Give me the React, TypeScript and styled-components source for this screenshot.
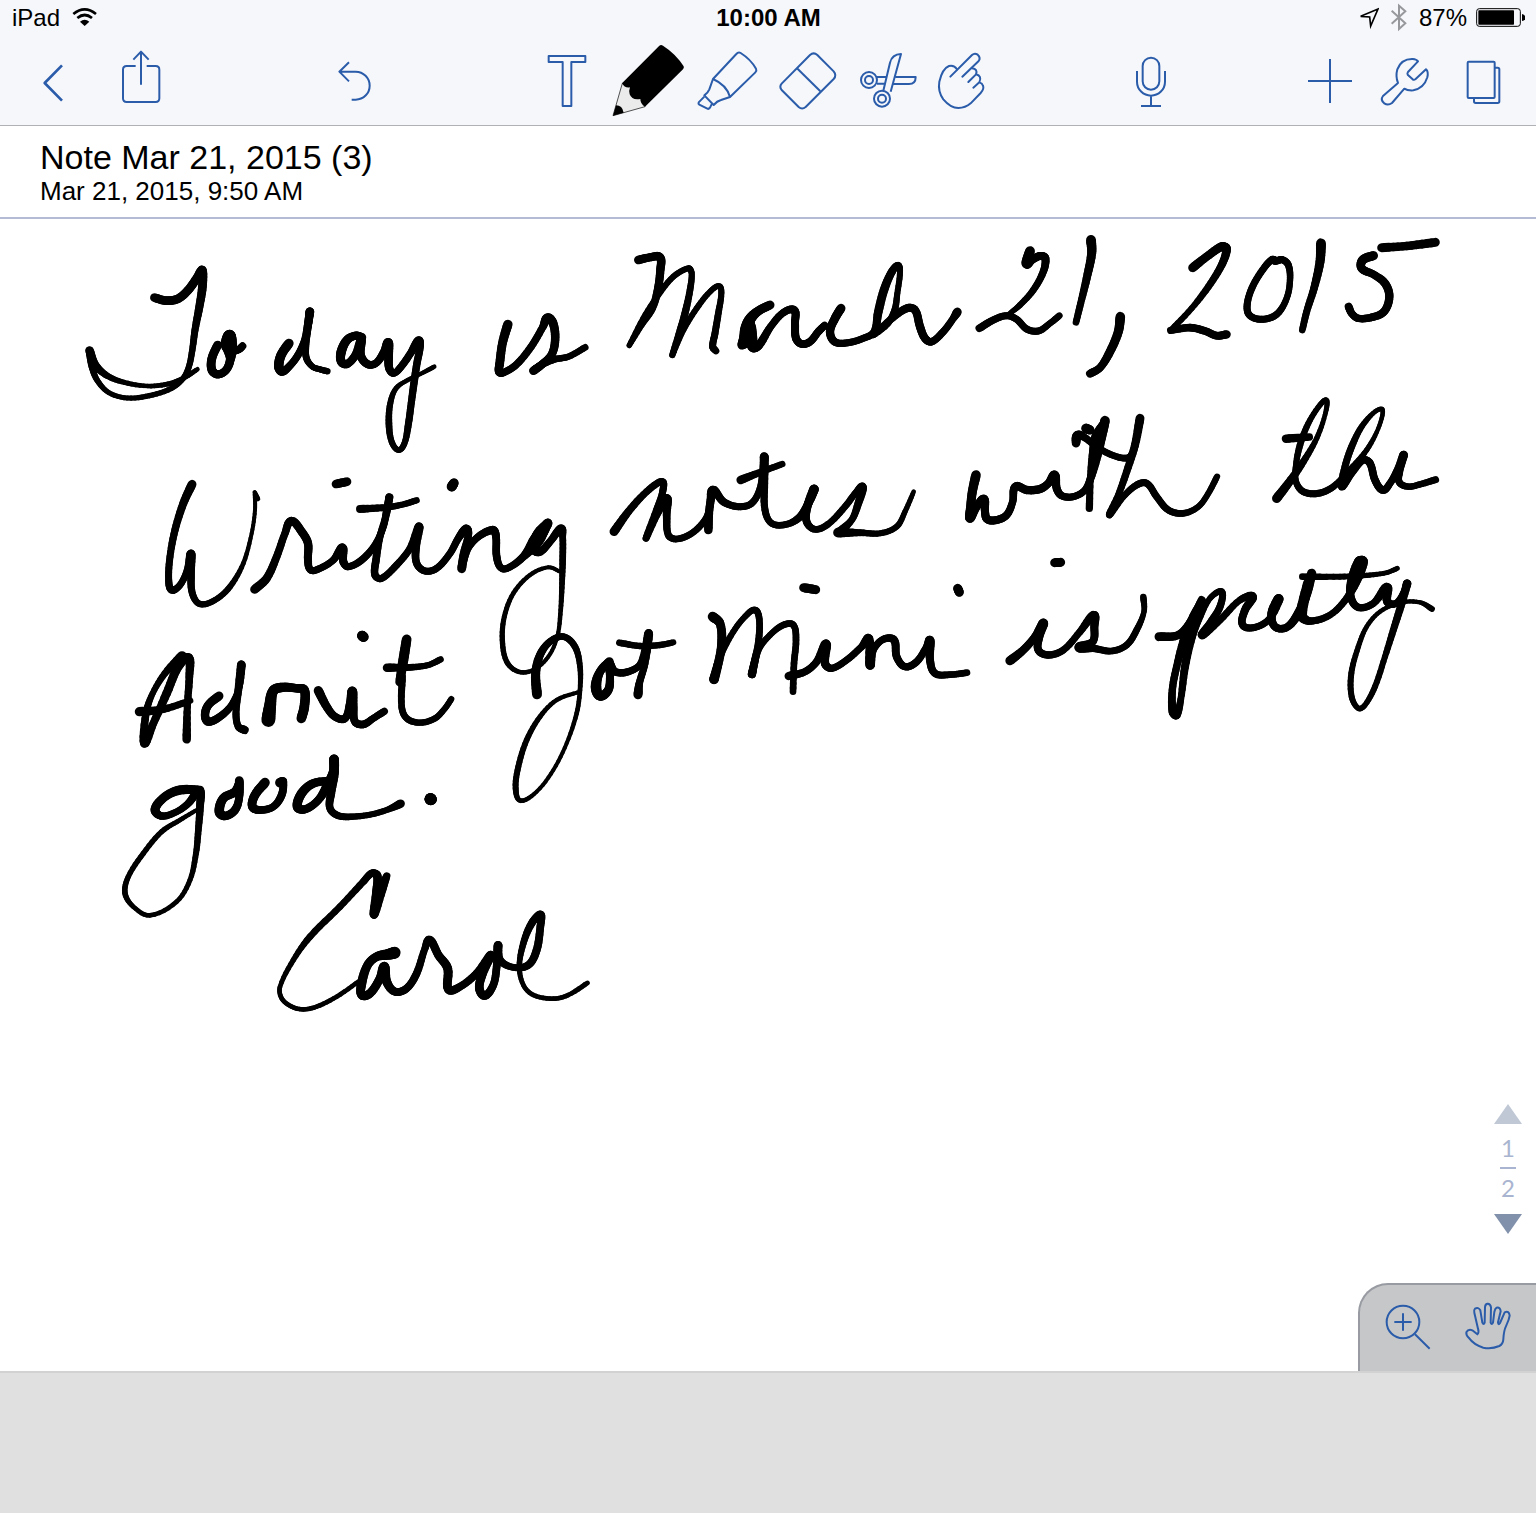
import React from "react";
import styled, { createGlobalStyle } from "styled-components";

const INK = "#2a5caa";
const BAR = "#f6f7fb";

const GlobalStyle = createGlobalStyle`
  * { box-sizing: border-box; }
  body {
    margin: 0;
    background: #e0e0e0;
    color: #000;
    font-family: "Liberation Sans", Arial, Helvetica, sans-serif;
  }
`;

const Screen = styled.div`
  display: flex;
  flex-direction: column;
  min-height: 100vh;
`;

const TopBar = styled.header`
  background: ${BAR};
  border-bottom: 1px solid #b0b1b5;
`;

const StatusBar = styled.div`
  display: grid;
  grid-template-columns: 1fr auto 1fr;
  align-items: center;
  height: 37px;
  padding: 0 11px 2px 12px;
  font-size: 24px;
  line-height: 28px;
`;

const StatusGroup = styled.div<{ $end?: boolean }>`
  display: flex;
  align-items: center;
  justify-content: ${(p) => (p.$end ? "flex-end" : "flex-start")};
  gap: 12px;
`;

const Battery = styled.span`
  display: flex;
  align-items: center;
  gap: 9px;
`;

const Clock = styled.time`
  font-weight: 700;
`;

const StatusGlyph = styled.svg`
  display: block;
  height: 31px;
  fill: none;
  stroke: #000;
`;

const Toolbar = styled.nav`
  display: grid;
  grid-template-columns: 1fr auto 1fr;
  height: 88px;
`;

const ToolZone = styled.div<{ $pad?: string }>`
  display: flex;
  justify-content: space-between;
  padding: ${(p) => p.$pad ?? "0"};
`;

const ToolGroup = styled.div<{ $gap?: number }>`
  display: flex;
  gap: ${(p) => p.$gap ?? 0}px;
`;

const IconButton = styled.button`
  display: block;
  width: 80px;
  height: 100%;
  padding: 0;
  border: 0;
  background: none;
  cursor: pointer;
`;

const LineIcon = styled.svg`
  display: block;
  width: 100%;
  height: 100%;
  fill: none;
  stroke: ${INK};
  stroke-width: 6;
  stroke-linejoin: round;
`;

const NoteHeading = styled.section`
  padding: 11px 40px 12px;
  background: #fff;
  border-bottom: 2px solid #b3bcd4;
`;

const NoteTitle = styled.h1`
  margin: 0;
  font-size: 34px;
  font-weight: 400;
  line-height: 40px;
`;

const NoteDate = styled.p`
  margin: 0;
  font-size: 26px;
  line-height: 28px;
`;

const Page = styled.main`
  position: relative;
  background: #fff;
`;

const InkLayer = styled.svg`
  display: block;
  width: 100%;
  stroke: #000;
  stroke-linecap: round;
`;

const Pager = styled.div`
  position: absolute;
  right: 14px;
  bottom: 137px;
  display: flex;
  flex-direction: column;
  align-items: center;
  width: 28px;
  color: #a9b5d0;
  font-family: Lato, "Liberation Sans", sans-serif;
  font-size: 24px;
  line-height: 28px;
`;

const PageNumbers = styled.div`
  display: flex;
  flex-direction: column;
  align-items: center;
  gap: 5px;
  padding: 10px 0 12px;
`;

const Divider = styled.span`
  width: 16px;
  height: 2px;
  background: #a9b5d0;
`;

const ArrowButton = styled.button<{ $down?: boolean }>`
  width: 28px;
  height: 20px;
  padding: 0;
  border: 0;
  background: ${(p) => (p.$down ? "#8190ab" : "#c0c8d5")};
  clip-path: ${(p) =>
    p.$down ? "polygon(0 0, 100% 0, 50% 100%)" : "polygon(50% 0, 100% 100%, 0 100%)"};
  cursor: pointer;
`;

const ViewTools = styled.div`
  position: absolute;
  right: 0;
  bottom: 0;
  display: flex;
  height: 88px;
  padding: 0 8px;
  background: #c6c7c9;
  border: solid #989ba1;
  border-width: 2px 0 0 2px;
  border-top-left-radius: 30px;
`;

const Desk = styled.footer`
  flex: 1;
  min-height: 40px;
  background: #e0e0e0;
  border-top: 2px solid #d2d2d3;
`;

/* Each word group keeps its pen samples as "x,y,width" triples in its own space. */
type InkGroup = { x: number; y: number; unitX: number; unitY: number; strokes: string[] };

const INK_GROUPS: InkGroup[] = [
  {
    x: 70, y: 230, unitX: 2.96, unitY: 3,
    strokes: [
      "250,203,26 285,212,26 320,206,26 350,180,26 375,145,26 392,120,24 392,170,26 383,230,24 370,300,21 362,360,19 352,410,18 335,445,17 300,475,16 235,497,16 170,504,15 115,488,15 80,450,17 65,410,20 58,362,24",
      "58,362,26 75,405,24 110,437,19 160,457,15 230,468,14 290,462,15 335,445,15 377,418,14",
      "437,345,26 420,385,26 420,420,26 437,433,24 462,420,24 475,385,26 472,345,46 472,318,36 468,345,44 480,362,22 500,358,22 511,348,22",
      "648,340,28 625,375,28 618,410,28 628,425,24 650,408,22 675,375,22 695,330,22 705,280,24 710,245,26 703,300,22 698,350,20 700,385,20 718,410,18 740,418,18 762,424,19",
      "864,322,26 845,317,24 820,330,26 803,365,28 803,395,26 820,402,24 845,375,24 862,330,26 860,375,26 880,402,24 905,400,22 930,365,24 942,338,28 943,380,26 945,415,24 958,430,20 980,410,22 1008,370,22 1031,332,26 1036,350,22 1027,400,22 1018,460,22 1010,520,21 1002,580,21 990,640,18 972,660,17 952,635,18 944,580,20 948,520,18 965,475,15 1000,450,13 1045,428,13 1078,410,14",
      "1296,283,28 1280,340,26 1272,400,26 1270,425,24 1282,428,22 1320,405,22 1365,350,22 1400,290,22 1413,264,28 1430,280,26 1436,330,25 1425,375,24 1395,405,24 1372,422,26",
      "1372,422,24 1400,402,22 1435,388,20 1475,380,19 1525,352,20",
    ],
  },
  {
    x: 600, y: 230, unitX: 3, unitY: 3,
    strokes: [
      "115,90,26 150,82,24 180,82,26 181,120,25 174,175,24 157,235,22 125,285,18 88,346,16",
      "88,346,16 130,265,18 175,195,18 220,140,18 265,115,18 275,130,18 270,180,20 255,250,22 240,300,20 217,375,19",
      "217,375,18 250,300,18 290,235,18 330,185,17 357,168,17 364,190,18 355,250,20 345,310,21 338,350,21 348,363,20",
      "510,225,27 475,243,27 450,268,32 442,300,44 440,325,46 426,345,26",
      "452,290,32 455,325,34 458,352,28 477,345,26 512,290,22 550,248,22 583,241,24 585,280,24 588,325,24 605,342,23 630,335,23 655,305,23 674,286,22",
      "723,235,27 705,265,26 690,305,25 705,336,23 745,338,21 790,325,21 822,306,22 835,245,26 852,180,26 874,128,24 893,106,20 900,125,18 892,190,18 884,240,20 862,282,20 820,316,16 870,270,22 920,235,24 945,240,24 960,290,25 975,325,24 995,335,22 1030,305,22 1060,265,21 1072,246,27",
    ],
  },
  {
    x: 960, y: 225, unitX: 3, unitY: 3,
    strokes: [
      "210,78,29 200,115,31 215,105,24 240,93,24 256,100,24 250,140,22 220,195,20 180,240,18 150,265,15",
      "58,310,23 100,285,22 140,272,21 170,283,21 200,312,21 235,318,21 270,295,19 298,272,20",
      "393,45,30 395,85,27 380,160,24 362,235,21 348,292,20",
      "481,275,29 475,320,27 450,380,26 420,428,23 390,446,24",
      "698,128,27 740,95,25 785,65,27 800,72,26 785,120,23 745,185,21 695,250,18 636,312,18",
      "632,316,22 690,308,23 735,318,23 770,332,23 800,328,25",
      "945,107,26 936,104,21 915,125,21 880,180,21 862,235,21 868,270,21 905,283,21 950,268,21 980,220,19 990,165,19 985,120,21 967,104,21 950,108,22",
      "1083,55,30 1080,110,27 1062,190,23 1040,260,21 1027,315,20",
      "1240,92,28 1208,105,27 1205,130,25 1240,148,23 1275,175,25 1288,215,25 1272,260,24 1235,277,23 1195,280,22 1175,265,22 1166,245,24",
      "1265,68,27 1340,63,25 1426,52,27",
      "48,750,29 37,800,27 32,845,27 30,880,27 50,845,24 72,822,26 75,860,24 82,883,24 110,885,24 140,870,23 158,830,22 166,785,24 200,795,25 240,792,25 265,775,23 284,750,27 290,790,24 305,812,22 340,815,21 375,795,21 395,750,24 413,680,30 428,620,28 435,587,29",
      "430,600,28 410,635,32 402,680,30 392,750,20 388,850,22",
      "348,655,25 352,632,29 370,635,22 420,672,20 470,695,20 505,698,20 520,680,20",
      "540,580,27 525,660,24 500,740,22 475,810,20 448,870,20 490,815,19 530,780,21 560,775,21 590,815,21 625,855,21 670,865,20 715,845,18 745,805,18 771,755,19",
      "378,610,29 390,615,27",
      "950,820,28 985,775,25 1030,710,21 1070,640,16 1095,570,14 1100,527,16 1080,540,16 1045,595,18 1020,660,20 1008,720,18 1008,770,19 1030,800,21 1075,805,21 1120,785,20 1170,735,20 1220,675,16 1255,610,13 1268,555,14 1245,560,14 1205,605,18 1175,665,21 1155,725,21 1145,785,22 1175,745,21 1210,705,21 1230,715,23 1245,765,23 1268,795,23 1290,775,21 1315,730,23 1331,690,26 1318,740,23 1318,772,21 1345,785,19 1380,778,19 1427,764,21",
      "978,641,26 1048,636,22",
    ],
  },
  {
    x: 100, y: 460, unitX: 3, unitY: 3,
    strokes: [
      "276,73,27 250,130,24 225,210,22 210,290,21 206,360,21 215,390,22 240,375,20 262,330,21 273,282,27 273,340,23 277,400,21 300,432,19 345,420,18 390,380,18 430,310,14 455,220,12 465,150,12 464,98,12",
      "464,96,12 474,117,14",
      "464,388,27 500,355,25 530,290,23 555,220,22 574,183,25 605,215,25 624,250,25 624,300,24 632,330,21 660,325,21 700,300,21 727,263,26 730,305,24 745,320,21 785,300,22 825,255,21 850,200,21 860,150,21 868,112,24 860,160,21 840,230,21 828,300,23 825,345,22 845,355,21 890,315,21 930,265,21 957,200,26 948,260,24 950,310,22 975,333,21 1010,325,21 1050,280,21 1075,235,22 1098,207,27 1105,225,22 1092,280,25 1085,326,27",
      "1090,310,20 1105,265,20 1135,230,22 1178,210,25 1188,230,23 1190,290,23 1205,325,21 1235,318,21 1275,285,24 1310,240,44 1343,190,27",
      "1343,190,27 1318,225,42 1302,265,32 1320,275,24 1350,245,22 1382,206,25 1388,230,20 1388,300,20 1386,370,17 1382,450,14 1372,530,12 1345,590,12 1300,630,13 1255,635,14 1220,605,16 1207,540,16 1213,470,15 1240,400,14 1290,345,13 1345,322,12 1380,335,12",
      "708,72,26 741,65,26",
      "1055,80,30 1062,69,28",
      "780,147,24 860,142,20 910,133,18 950,121,19",
      "246,588,30 195,640,20 158,700,18 138,760,22 133,850,26 160,790,23 200,700,26 235,620,26 266,594,28 268,650,23 262,740,21 260,838,26",
      "118,755,28 190,748,22 270,722,20",
      "357,708,27 325,735,25 315,765,25 325,785,25 360,770,23 395,735,21 418,680,20 424,614,26 415,690,23 408,760,21 415,800,21 434,810,25",
      "505,780,42 510,740,36 520,692,30 548,682,28 590,685,25 613,690,28 613,740,29 604,775,29",
      "655,692,28 680,740,25 705,770,23 735,775,23 750,730,24 757,694,29 760,740,25 765,785,23 790,793,23 820,775,21 853,754,22",
      "786,527,30 791,531,30",
      "920,538,29 910,600,30 899,666,26",
      "907,650,22 905,740,20 920,775,20 960,788,19 1005,775,19 1035,745,18 1054,717,18",
      "861,623,26 930,622,20 985,615,18 1022,598,19",
      "1311,703,30 1307,640,27 1320,585,24 1350,545,21 1390,530,20 1425,560,20 1440,620,17 1440,690,14 1430,760,14 1400,850,12 1360,930,12 1310,995,12 1262,1022,14 1247,985,18 1255,920,18 1280,840,17 1320,770,15 1370,720,13 1440,695,12",
    ],
  },
  {
    x: 500, y: 400, unitX: 3, unitY: 3,
    strokes: [
      "342,395,27 385,335,23 440,275,21 485,245,22 488,275,21 470,330,22 438,415,20 470,345,22 500,295,27 500,345,23 505,405,21 530,417,20 575,400,20 615,360,20 630,320,20 638,270,26 670,305,23 715,320,21 755,310,21 780,265,20 790,200,22 793,172,27 793,250,23 795,330,21 815,370,20 860,373,20 900,350,23 930,300,25 942,268,29 922,320,25 920,365,23 945,388,20 985,372,20 1035,320,20 1070,275,20 1088,262,26 1075,310,23 1055,360,20 1015,398,26",
      "625,390,26 628,330,24 636,275,25",
      "1014,398,30 1080,398,20 1140,400,18 1190,380,18 1215,335,16 1241,275,14",
      "722,240,26 785,215,20 847,192,19",
      "328,785,27 300,815,25 288,860,32 300,888,28 325,870,26 330,830,24 328,790,25 345,815,23 385,815,22 422,790,20 446,700,26 435,790,21 418,850,22 414,884,28",
      "358,728,20 420,738,19 480,735,19 520,727,18",
      "638,650,30 660,670,26 665,730,27 655,790,26 642,838,29 660,770,21 700,695,18 735,650,18 765,630,20 778,660,20 775,730,21 765,780,23 756,822,25 775,750,20 810,705,18 850,675,20 880,675,20 888,720,20 882,790,20 879,875,20",
      "866,828,25 915,815,22 950,785,22 978,732,28 975,790,25 995,805,21 1040,780,21 1085,740,21 1107,716,26 1110,795,28 1120,750,21 1150,718,21 1182,720,24 1190,770,23 1215,800,22 1250,785,22 1280,740,21 1290,722,28 1290,780,24 1305,820,22 1350,824,20 1401,818,20",
      "911,563,27 947,569,27",
      "1373,565,27 1378,577,27",
    ],
  },
  {
    x: 980, y: 390, unitX: 3, unitY: 3,
    strokes: [
      "90,812,28 130,780,24 165,740,23 190,700,29 178,740,24 175,780,23 205,795,22 250,780,21 300,725,21 340,676,27 343,710,24 338,755,23 298,772,30 340,775,22 395,783,20 440,765,20 470,720,20 492,665,16 490,621,20",
      "224,518,27 242,517,27",
      "537,740,27 595,735,24 635,690,24 665,630,24",
      "665,632,22 640,680,26 615,740,26 590,830,22 577,900,22 578,965,25 590,975,24 602,930,20 615,830,24 635,740,26 655,690,22 690,625,17 725,605,20 720,650,22 690,700,23 667,735,26 720,690,21 780,630,20 818,620,26 795,660,24 788,705,22 825,712,21 870,685,21 896,627,30 875,670,26 885,710,23 920,712,23 955,670,27 980,610,28 995,550,28",
      "985,580,32 965,675,32 990,693,22 1050,675,20 1100,625,21 1130,570,28 1148,515,32 1135,515,26 1115,570,26 1112,620,24 1135,652,22 1180,640,21 1220,592,28 1222,635,25 1248,640,20 1275,600,20 1281,582,26 1262,650,23 1240,720,21 1215,800,18 1185,890,18 1155,945,16 1135,955,16 1115,920,18 1114,850,18 1135,770,16 1160,710,14 1200,665,13 1260,638,13 1320,637,13 1356,657,18",
      "967,560,20 1080,560,18 1160,556,16 1220,548,14 1252,535,15",
    ],
  },
  {
    x: 100, y: 740, unitX: 3, unitY: 3,
    strokes: [
      "300,150,26 240,150,28 195,170,26 165,208,27 185,228,22 230,215,20 265,190,22 298,152,27 300,200,23 295,270,20 288,340,18 270,420,15 230,485,14 150,526,14 100,500,14 75,460,17 85,410,16 130,340,16 185,275,16 240,240,14 290,210,12",
      "418,122,27 418,170,23 405,210,25 375,228,25 358,215,29 370,175,27 405,155,26 416,130,22",
      "495,128,29 465,165,27 457,200,26 480,210,23 520,200,22 545,165,24 550,125,22 540,128,30",
      "695,122,24 640,130,26 605,160,28 592,200,28 615,208,24 655,180,24 685,130,28 702,90,28 702,58,29 702,100,29 693,160,25 690,205,22 715,227,21 760,230,19 820,222,18 865,208,18 902,191,26",
      "991,177,35 993,178,35",
      "860,408,22 845,450,28 822,524,25 828,460,24 832,408,26 815,400,22 790,425,21 720,500,20 630,590,20 580,660,16 540,740,14 545,775,14 575,800,14 610,808,14 650,800,14 710,770,14 775,725,14",
      "884,638,36 865,643,32 830,650,26 803,675,26 785,730,28 785,765,26 810,760,26 840,715,26 853,680,29 860,725,27 885,755,24 920,745,23 950,700,23 975,625,21 990,600,25 1015,645,25 1043,685,27 1045,748,26 1080,740,23 1130,700,23 1172,645,26 1148,700,26 1138,745,26 1155,767,25 1180,735,23 1190,680,23 1194,616,26 1200,660,23 1240,682,20 1285,675,23 1310,630,24 1321,560,23 1322,523,22 1295,550,23 1270,610,20 1258,680,16 1270,735,14 1300,765,14 1360,776,14 1405,765,14 1462,729,15",
    ],
  },
];

const STEPS = 6;

/* Smooths the pen samples with a Catmull-Rom curve; width changes along the stroke. */
function smooth(stroke: string): number[][] {
  const pts = stroke.split(" ").map((t) => t.split(",").map(Number));
  const out: number[][] = [pts[0]];
  for (let i = 0; i < pts.length - 1; i++) {
    const a = pts[Math.max(0, i - 1)];
    const b = pts[i];
    const c = pts[i + 1];
    const d = pts[Math.min(pts.length - 1, i + 2)];
    const len = Math.hypot(c[0] - b[0], c[1] - b[1]);
    const tangent = (p: number[], q: number[]) => {
      const span = Math.hypot(q[0] - p[0], q[1] - p[1]) || 1;
      const k = Math.min(0.7, len / span);
      return [(q[0] - p[0]) * k, (q[1] - p[1]) * k];
    };
    const m0 = tangent(a, c);
    const m1 = tangent(b, d);
    for (let s = 1; s <= STEPS; s++) {
      const t = s / STEPS;
      const t2 = t * t;
      const t3 = t2 * t;
      const h0 = 2 * t3 - 3 * t2 + 1;
      const h1 = t3 - 2 * t2 + t;
      const h2 = 3 * t2 - 2 * t3;
      const h3 = t3 - t2;
      out.push([
        h0 * b[0] + h1 * m0[0] + h2 * c[0] + h3 * m1[0],
        h0 * b[1] + h1 * m0[1] + h2 * c[1] + h3 * m1[1],
        b[2] + (c[2] - b[2]) * t,
      ]);
    }
  }
  return out;
}

function PenStroke({ samples }: { samples: string }) {
  const pts = smooth(samples);
  return (
    <>
      {pts.slice(1).map((p, i) => (
        <line key={i} x1={pts[i][0]} y1={pts[i][1]} x2={p[0]} y2={p[1]} strokeWidth={(pts[i][2] + p[2]) / 2} />
      ))}
    </>
  );
}

function Handwriting() {
  return (
    <InkLayer
      viewBox="0 219 1536 1152"
      role="img"
      aria-label="Today is March 21, 2015. Writing notes with the Adonit Jot Mini is pretty good. Carol"
    >
      {INK_GROUPS.map((g, i) => (
        <g key={i} transform={`translate(${g.x} ${g.y}) scale(${1 / g.unitX} ${1 / g.unitY})`}>
          {g.strokes.map((s, j) => (
            <PenStroke key={j} samples={s} />
          ))}
        </g>
      ))}
    </InkLayer>
  );
}

type ToolProps = { label: string; left: number; top?: number; tall?: number; children: React.ReactNode };

function Tool({ label, left, top = 111, tall = 264, children }: ToolProps) {
  return (
    <IconButton type="button" aria-label={label}>
      <LineIcon viewBox={`${left} ${top} 240 ${tall}`} aria-hidden="true">
        {children}
      </LineIcon>
    </IconButton>
  );
}

export default function App() {
  return (
    <Screen>
      <GlobalStyle />
      <TopBar>
        <StatusBar>
          <StatusGroup>
            <span>iPad</span>
            <StatusGlyph width="26" viewBox="216 6 78 93" aria-label="Wi-Fi">
              <path d="M220 42Q254 14 288 42" strokeWidth="8" />
              <path d="M232 54Q254 36 276 54" strokeWidth="8" />
              <path d="M240 65Q254 54 268 65L254 78Z" fill="#000" stroke="none" />
            </StatusGlyph>
          </StatusGroup>
          <Clock>10:00 AM</Clock>
          <StatusGroup $end>
            <StatusGlyph width="20" viewBox="714 3 60 93" aria-label="Location">
              <path d="M719 46L771 24L749 75L746 48Z" strokeWidth="5" />
            </StatusGlyph>
            <StatusGlyph width="16" viewBox="810 6 48 93" aria-label="Bluetooth">
              <path d="M812 32L853 70L834 87V17L853 34L812 71" strokeWidth="6" stroke="#97989c" />
            </StatusGlyph>
            <Battery>
              <span>87%</span>
              <StatusGlyph width="49" viewBox="1068 6 147 93" aria-label="Battery">
                <rect x="1070" y="26" width="131" height="53" rx="8" strokeWidth="3" />
                <rect x="1075" y="31" width="107" height="43" rx="2" fill="#000" stroke="none" />
                <path d="M1206 42Q1216 44 1216 53Q1216 61 1206 63Z" fill="#000" stroke="none" />
              </StatusGlyph>
            </Battery>
          </StatusGroup>
        </StatusBar>

        <Toolbar aria-label="Note tools">
          <ToolZone $pad="0 134px 0 13px">
            <ToolGroup $gap={8}>
              <Tool label="Back" left={39}>
                <path d="M186 196L134 249L186 302" strokeWidth="8" />
              </Tool>
              <Tool label="Share" left={303}>
                <path d="M407 198H380Q369 198 369 209V295Q369 306 380 306H467Q478 306 478 295V209Q478 198 467 198H440" />
                <path d="M423 254V156M400 179L423 155L446 179" />
              </Tool>
            </ToolGroup>
            <Tool label="Undo" left={942}>
              <path d="M1047 187L1018 215L1047 244M1018 215H1067A42 42 0 0 1 1067 299H1055" />
            </Tool>
          </ToolZone>

          <ToolGroup>
            <Tool label="Text" left={-6}>
              <path d="M56 168H166V186H124V318H98V186H56Z" />
            </Tool>
            <Tool label="Pencil" left={234}>
              <path d="M277 250L249 347L345 320L335 285L300 250Z" fill="#ebebeb" stroke="#000" strokeWidth="2" />
              <path
                d="M388 137Q393 133 399 137Q438 162 461 199Q463 204 459 208L345 320Q331 312 331 297Q306 302 299 283Q296 272 300 262Q284 265 276 250Z"
                fill="#000"
                stroke="none"
              />
              <path d="M258 316Q277 316 281 338L249 347Z" fill="#000" stroke="none" />
            </Tool>
            <Tool label="Highlighter" left={474}>
              <path d="M549 237L619 162Q625 155 632 159Q662 178 678 206Q681 212 676 217L600 291Q590 255 549 237Z" />
              <path d="M549 237L538 268Q534 278 523 286L551 315Q561 303 573 300L600 291" />
              <path d="M523 290L506 307Q504 311 508 314L532 326Q536 328 540 323L546 311" />
            </Tool>
            <Tool label="Eraser" left={714}>
              <path d="M755 251Q747 260 755 270L806 321Q816 330 827 321L911 237Q921 226 911 214L862 165Q851 155 840 165Z" />
              <path d="M801 205L871 274" />
            </Tool>
            <Tool label="Cut" left={954}>
              <circle cx="1017" cy="240" r="24" />
              <circle cx="1017" cy="240" r="12" />
              <circle cx="1056" cy="296" r="24" />
              <circle cx="1056" cy="296" r="12" />
              <path d="M1060 272L1080 188Q1086 163 1113 162L1082 275M1040 231H1069M1041 251H1064M1097 231H1157Q1157 252 1137 252H1090" />
            </Tool>
            <Tool label="Select" left={1194}>
              <path d="M1261 230L1326 165Q1334 158 1343 164Q1353 173 1346 183L1297 230" strokeLinecap="round" />
              <path
                d="M1281 208Q1272 194 1257 198Q1237 206 1228 245Q1223 275 1240 298Q1262 324 1285 324Q1306 324 1322 310L1352 279Q1363 267 1359 257Q1357 250 1348 247L1330 263M1348 247Q1357 228 1338 223L1315 246M1338 223Q1344 207 1326 205"
                strokeLinecap="round"
              />
            </Tool>
          </ToolGroup>

          <ToolZone $pad="0 6px 0 103px">
            <Tool label="Record" left={-27}>
              <rect x="68" y="173" width="50" height="96" rx="25" />
              <path d="M51 213V245A42 42 0 0 0 135 245V213M93 288V317M63 318H123" />
            </Tool>
            <ToolGroup>
              <Tool label="Add" left={510}>
                <path d="M564 243H696M630 177V309" />
              </Tool>
              <Tool label="Settings" left={750}>
                <path d="M894 184L864 216Q861 220 863 224L878 238Q882 241 887 237L918 208Q926 215 922 232Q912 265 880 271Q862 272 853 266L816 309Q804 318 793 310Q780 300 789 288L834 249Q826 230 832 208Q844 176 878 177Q890 178 894 184Z" />
              </Tool>
              <Tool label="Pages" left={990}>
                <rect x="1043" y="185" width="81" height="109" rx="3" />
                <path d="M1124 203H1133Q1138 203 1138 208V304Q1138 309 1133 309H1067Q1062 309 1062 304V294" />
              </Tool>
            </ToolGroup>
          </ToolZone>
        </Toolbar>
      </TopBar>

      <NoteHeading>
        <NoteTitle>Note Mar 21, 2015 (3)</NoteTitle>
        <NoteDate>Mar 21, 2015, 9:50 AM</NoteDate>
      </NoteHeading>

      <Page>
        <Handwriting />
        <Pager>
          <ArrowButton type="button" aria-label="Previous page" />
          <PageNumbers>
            <span>1</span>
            <Divider />
            <span>2</span>
          </PageNumbers>
          <ArrowButton type="button" aria-label="Next page" $down />
        </Pager>
        <ViewTools>
          <Tool label="Zoom in" left={84} top={585} tall={258}>
            <circle cx="189" cy="696" r="49" />
            <path d="M189 670V722M163 696H215M225 733L269 776" />
          </Tool>
          <Tool label="Pan" left={324} top={585} tall={258}>
            <path d="M412 733L397 721Q385 716 379 727Q378 736 386 743Q402 765 430 773Q455 778 478 768Q489 762 490 748Q491 722 499 706Q507 690 509 677Q507 661 494 667L480 699Q475 707 474 697L482 664Q481 651 470 653Q465 656 463 666L459 698Q455 706 452 698L453 652Q451 640 442 641Q435 643 435 652L434 698Q431 706 427 698L421 661Q415 650 405 656Q401 660 403 668L414 716Q418 727 412 733Z" />
          </Tool>
        </ViewTools>
      </Page>
      <Desk />
    </Screen>
  );
}
